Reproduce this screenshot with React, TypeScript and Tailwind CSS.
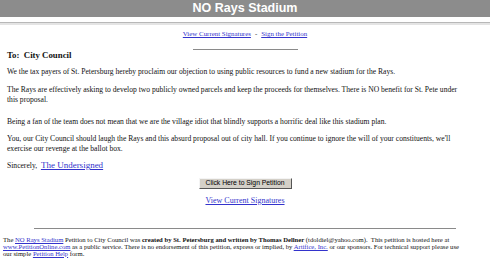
export default function App() {
  return (
    <div className="w-[490px] h-[262px] overflow-hidden bg-white font-['Liberation_Serif',serif] text-[#111]">
      {/* title bar */}
      <div className="flex h-[17px] items-center justify-center bg-[#8c8c8c]">
        <span className="font-['Liberation_Sans',Arial,sans-serif] text-[12.5px] font-bold leading-none text-white">
          NO Rays Stadium
        </span>
      </div>
      <div className="mt-[5px] h-[3px] border-t border-[#b8b8b8] bg-[#e4e4e4]" />

      {/* top links */}
      <div className="mt-[5px] text-center text-[6.9px] leading-[8px]">
        <a className="text-[#3333cc] underline">View Current Signatures</a>
        <span className="mx-[4px]">-</span>
        <a className="text-[#3333cc] underline">Sign the Petition</a>
      </div>
      <div className="mx-auto mt-[11px] h-px w-[105px] bg-[#8a8a8a]" />

      {/* letter */}
      <div className="px-[7px] text-[7.6px] leading-[10px]">
        <p className="text-[8.8px] font-bold leading-[10px]">To:&nbsp; City Council</p>
        <p className="mt-[7px]">
          We the tax payers of St. Petersburg hereby proclaim our objection to using public resources to fund a new stadium for the Rays.
        </p>
        <p className="mt-[8px]">
          The Rays are effectively asking to develop two publicly owned parcels and keep the proceeds for themselves. There is NO benefit for St. Pete under
          <br />
          this proposal.
        </p>
        <p className="mt-[12px]">
          Being a fan of the team does not mean that we are the village idiot that blindly supports a horrific deal like this stadium plan.
        </p>
        <p className="mt-[7px]">
          You, our City Council should laugh the Rays and this absurd proposal out of city hall. If you continue to ignore the will of your constituents, we'll
          <br />
          exercise our revenge at the ballot box.
        </p>
        <p className="mt-[6px]">
          Sincerely,&nbsp;{" "}
          <a className="text-[9px] leading-[10px] text-[#3333cc] underline">The Undersigned</a>
        </p>
      </div>

      {/* sign button */}
      <div className="mt-[7px] flex justify-center">
        <button className="h-[11px] w-[93px] border border-b-[#555] border-l-[#f4f4f4] border-r-[#555] border-t-[#f4f4f4] bg-[#d4d0c8] font-['Liberation_Sans',Arial,sans-serif] text-[6.8px] leading-none text-black">
          Click Here to Sign Petition
        </button>
      </div>
      <div className="mt-[8px] text-center text-[8px] leading-[8px]">
        <a className="text-[#3333cc] underline">View Current Signatures</a>
      </div>

      <div className="mx-auto mt-[23px] h-px w-[422px] bg-[#8a8a8a]" />

      {/* footer */}
      <div className="mt-[8px] whitespace-nowrap px-[3px] text-[6.65px] leading-[6.75px]">
        <div>
          The <a className="text-[#3333cc] underline">NO Rays Stadium</a> Petition to City Council was{" "}
          <b>created by St. Petersburg and written by Thomas Dellner</b> (tdoldiel@yahoo.com).&nbsp; This petition is hosted here at
        </div>
        <div>
          <a className="text-[#3333cc] underline">www.PetitionOnline.com</a> as a public service. There is no endorsement of this petition, express or implied, by{" "}
          <a className="text-[#3333cc] underline">Artifice, Inc.</a> or our sponsors. For technical support please use
        </div>
        <div>
          our simple <a className="text-[#3333cc] underline">Petition Help</a> form.
        </div>
      </div>
    </div>
  );
}
